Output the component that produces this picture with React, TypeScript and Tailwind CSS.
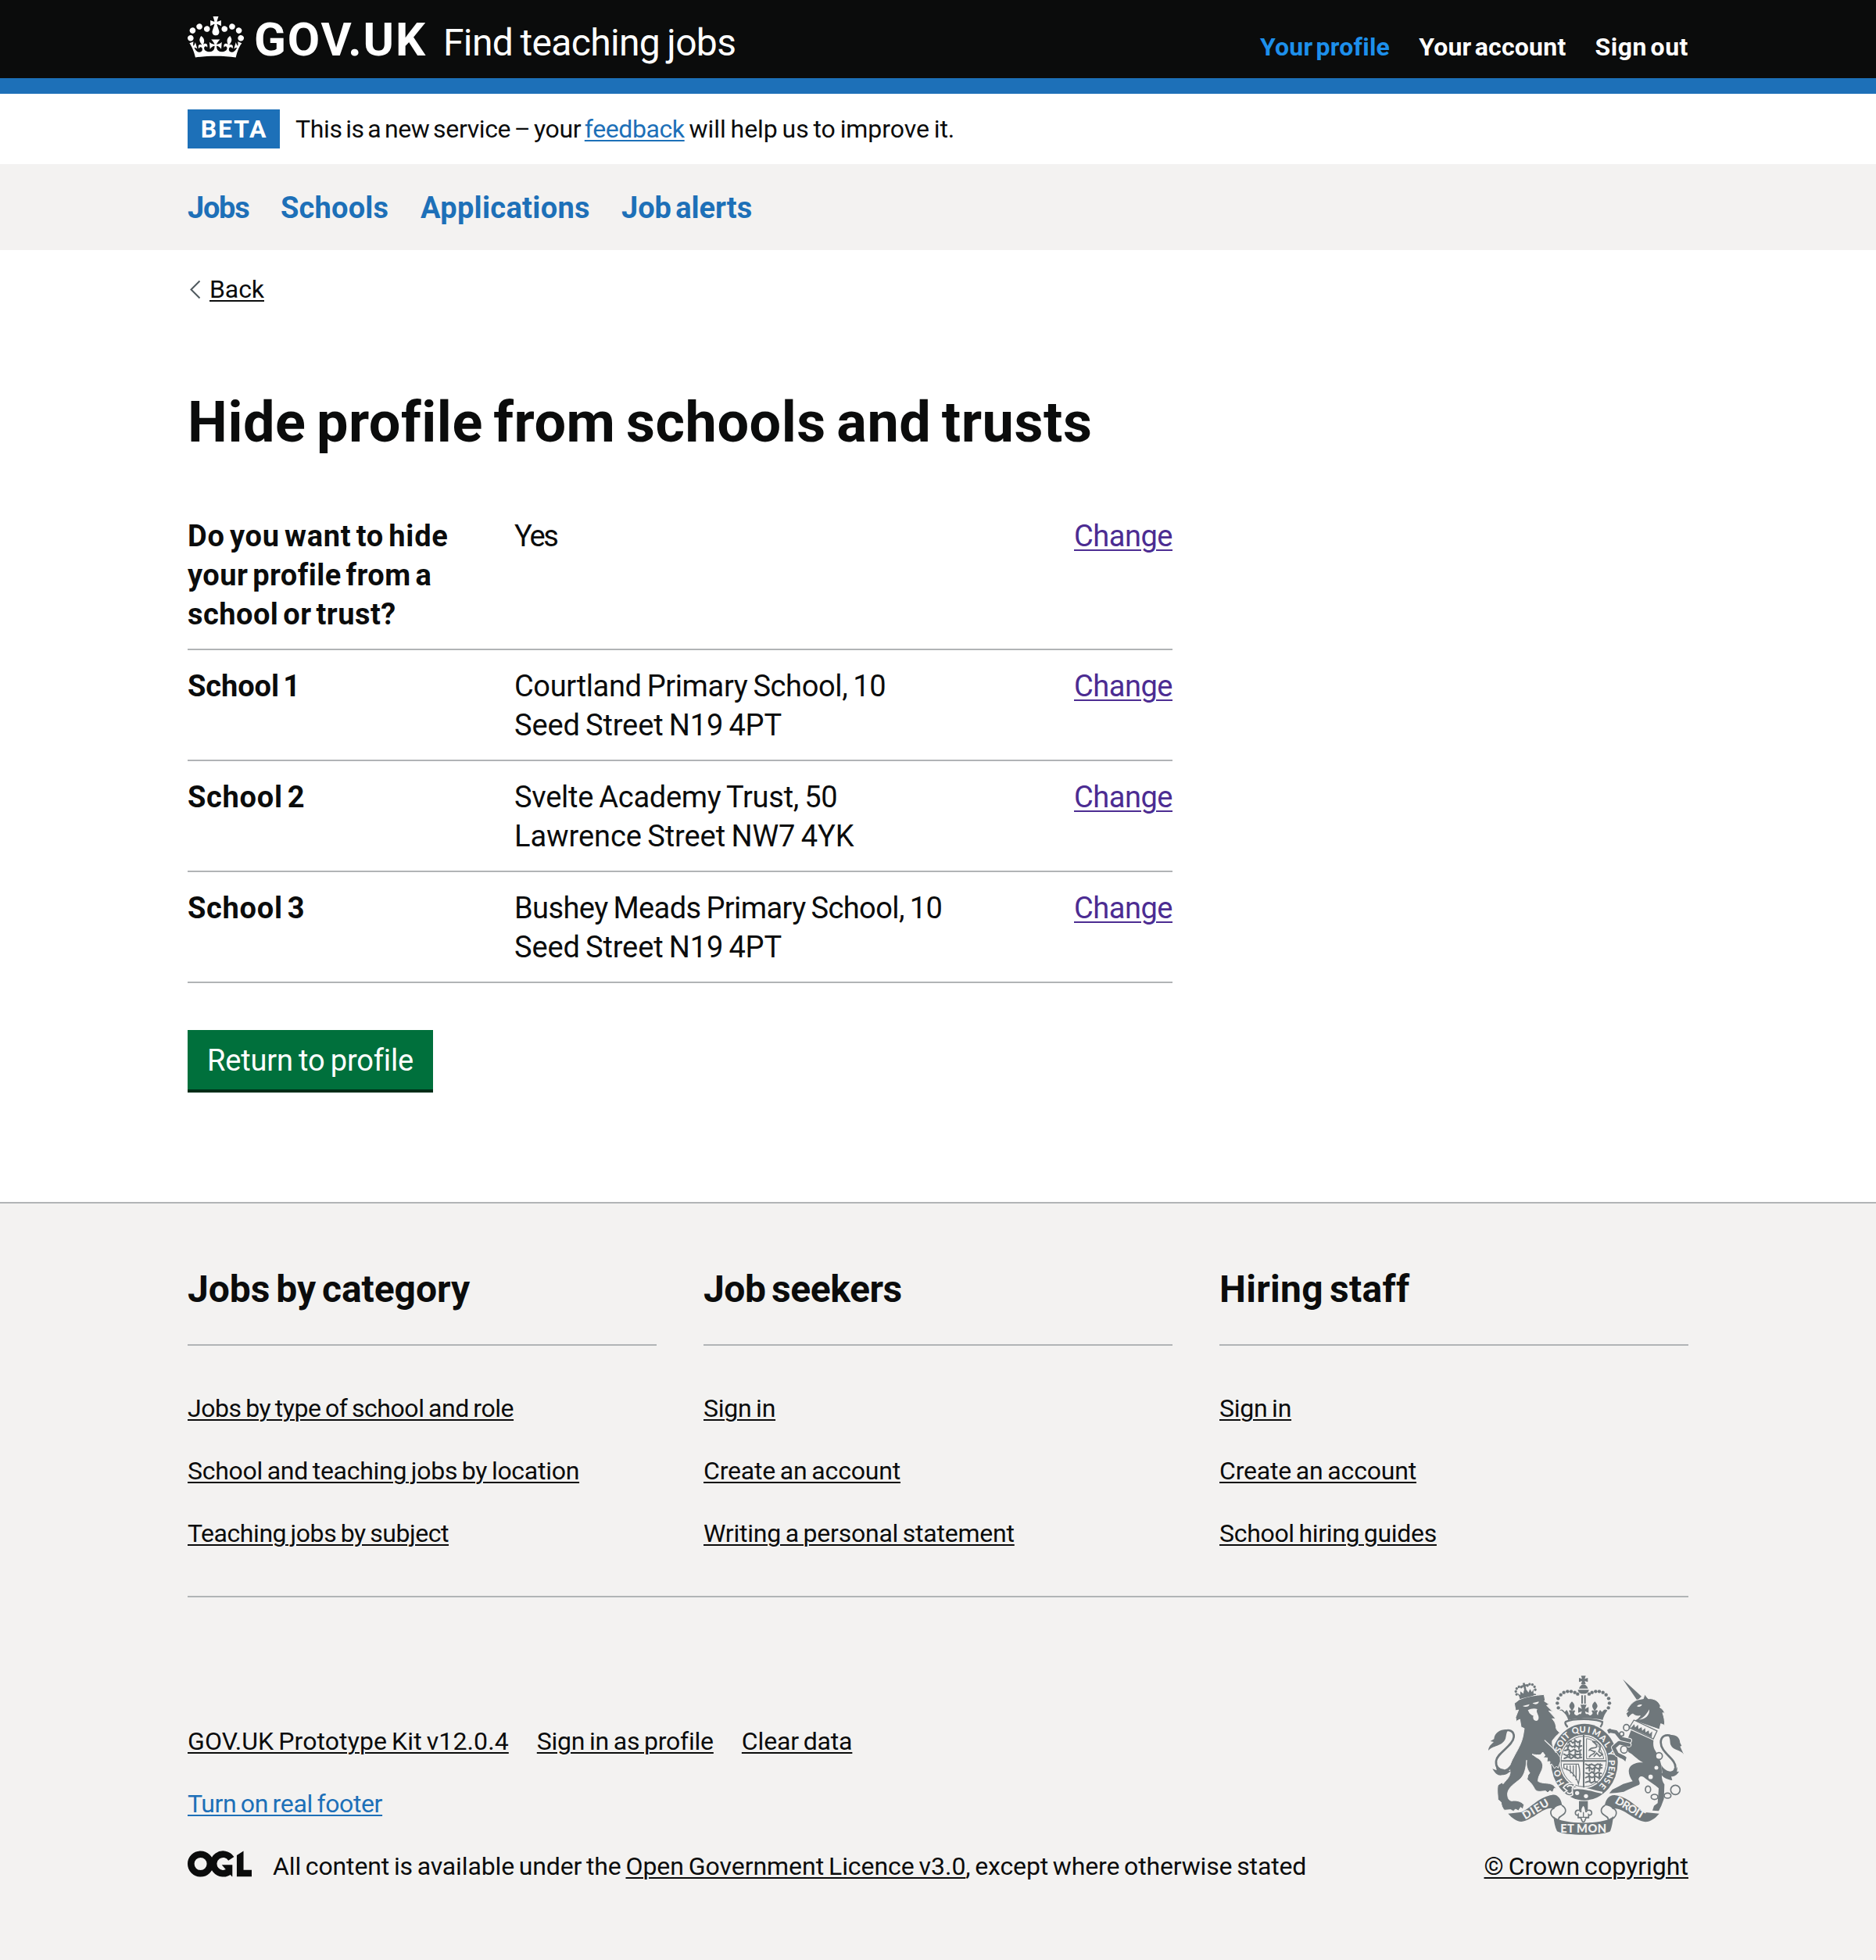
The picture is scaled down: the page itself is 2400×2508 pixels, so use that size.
import React from 'react';

type LinkItem = { label: string; track: string };

const serviceNav = [
  { label: 'Jobs', cls: 'tracking-[-1.3px] w-[119px]' },
  { label: 'Schools', cls: 'tracking-[0.18px] w-[179px]' },
  { label: 'Applications', cls: 'tracking-[0.31px] w-[257px]' },
  { label: 'Job alerts', cls: 'tracking-[-0.05px]' },
];

const footerColumns: { title: string; track: string; links: LinkItem[] }[] = [
  {
    title: 'Jobs by category',
    track: 'tracking-[-0.05px]',
    links: [
      { label: 'Jobs by type of school and role', track: 'tracking-[-0.44px]' },
      { label: 'School and teaching jobs by location', track: 'tracking-[-0.27px]' },
      { label: 'Teaching jobs by subject', track: 'tracking-[-0.45px]' },
    ],
  },
  {
    title: 'Job seekers',
    track: 'tracking-[-0.45px]',
    links: [
      { label: 'Sign in', track: 'tracking-[-0.25px]' },
      { label: 'Create an account', track: 'tracking-[-0.18px]' },
      { label: 'Writing a personal statement', track: 'tracking-[-0.23px]' },
    ],
  },
  {
    title: 'Hiring staff',
    track: 'tracking-[0.28px]',
    links: [
      { label: 'Sign in', track: 'tracking-[-0.25px]' },
      { label: 'Create an account', track: 'tracking-[-0.18px]' },
      { label: 'School hiring guides', track: 'tracking-[-0.31px]' },
    ],
  },
];

type Line = { text: string; track: string };
const summary: { key: Line[]; value: Line[] }[] = [
  {
    key: [
      { text: 'Do you want to hide', track: 'tracking-[0.77px]' },
      { text: 'your profile from a', track: 'tracking-[0.44px]' },
      { text: 'school or trust?', track: 'tracking-[0.47px]' },
    ],
    value: [{ text: 'Yes', track: 'tracking-[-2.2px]' }],
  },
  {
    key: [{ text: 'School 1', track: 'tracking-[-0.1px]' }],
    value: [
      { text: 'Courtland Primary School, 10', track: 'tracking-[-0.37px]' },
      { text: 'Seed Street N19 4PT', track: 'tracking-[-0.14px]' },
    ],
  },
  {
    key: [{ text: 'School 2', track: 'tracking-[0.7px]' }],
    value: [
      { text: 'Svelte Academy Trust, 50', track: 'tracking-[-0.27px]' },
      { text: 'Lawrence Street NW7 4YK', track: 'tracking-[-0.07px]' },
    ],
  },
  {
    key: [{ text: 'School 3', track: 'tracking-[0.7px]' }],
    value: [
      { text: 'Bushey Meads Primary School, 10', track: 'tracking-[-0.58px]' },
      { text: 'Seed Street N19 4PT', track: 'tracking-[-0.14px]' },
    ],
  },
];

function CrownIcon() {
  return (
    <svg viewBox="0 0 132 97" className="mt-px h-[53px] w-[72px] shrink-0" fill="currentColor" aria-hidden="true">
      <path
        fillRule="evenodd"
        d="M25 30.2c3.5 1.5 7.7-.2 9.1-3.7 1.5-3.6-.2-7.8-3.9-9.2-3.6-1.4-7.6.3-9.1 3.9-1.4 3.5.3 7.5 3.9 9zM9 39.5c3.6 1.5 7.8-.2 9.2-3.7 1.5-3.6-.2-7.8-3.9-9.1-3.6-1.5-7.6.2-9.1 3.8-1.4 3.5.3 7.5 3.8 9zM4.4 57.2c3.5 1.5 7.7-.2 9.1-3.8 1.5-3.6-.2-7.7-3.9-9.1-3.5-1.5-7.6.3-9.1 3.8-1.4 3.5.3 7.6 3.9 9.1zm38.3-21.4c3.5 1.5 7.7-.2 9.1-3.8 1.5-3.6-.2-7.7-3.9-9.1-3.6-1.5-7.6.3-9.1 3.8-1.3 3.6.4 7.7 3.9 9.1zm64.4-5.6c-3.6 1.5-7.8-.2-9.1-3.7-1.5-3.6.2-7.8 3.8-9.2 3.6-1.4 7.7.3 9.2 3.9 1.3 3.5-.4 7.5-3.9 9zm15.9 9.3c-3.6 1.5-7.7-.2-9.1-3.7-1.5-3.6.2-7.8 3.7-9.1 3.6-1.5 7.7.2 9.2 3.8 1.5 3.5-.3 7.5-3.8 9zm4.7 17.7c-3.6 1.5-7.8-.2-9.2-3.8-1.5-3.6.2-7.7 3.9-9.1 3.6-1.5 7.7.3 9.2 3.8 1.3 3.5-.4 7.6-3.9 9.1zM89.3 35.8c-3.6 1.5-7.8-.2-9.2-3.8-1.4-3.6.2-7.7 3.9-9.1 3.6-1.5 7.7.3 9.2 3.8 1.4 3.6-.3 7.7-3.9 9.1zM69.7 17.7l8.9 4.7V9.3l-8.9 2.8c-.2-.3-.5-.6-.9-.9L72.4 0H59.6l3.5 11.2c-.3.3-.6.5-.9.9l-8.8-2.8v13.1l8.8-4.7c.3.3.6.7.9.9l-5 15.4v.1c-.2.8-.4 1.6-.4 2.4 0 4.1 3.1 7.5 7 8.1h.2c.3 0 .7.1 1 .1.4 0 .7 0 1-.1h.2c4-.6 7.1-4.1 7.1-8.1 0-.8-.1-1.7-.4-2.4V34l-5.1-15.4c.4-.2.7-.6 1-.9zM66 92.8c16.9 0 32.8 1.1 47.1 3.2 4-16.9 8.9-26.7 14-33.5l-9.6-3.4c1 4.9 1.1 7.2 0 10.2-1.5-1.4-3-4.3-4.2-8.7L108.6 76c2.8-2 5-3.2 7.5-3.3-4.4 9.4-10 11.9-13.6 11.2-4.3-.8-6.3-4.6-5.6-7.9 1-4.7 5.7-5.9 8-.5 4.3-8.7-3-11.4-7.6-8.8 7.1-7.2 7.9-13.5 2.1-21.1-8 6.1-8.1 12.3-4.5 20.8-4.7-5.4-12.1-2.5-9.5 6.2 3.4-5.2 7.9-2 7.2 3.1-.6 4.3-6.4 7.8-13.5 7.2-10.3-.9-10.9-8-11.2-13.8 2.5-.5 7.1 1.8 11 7.3L80.2 60c-4.1 4.4-8 5.3-12.3 5.4 1.4-4.4 8-11.6 8-11.6H55.5s6.4 7.2 7.9 11.6c-4.2-.1-8-1-12.3-5.4l1.4 16.4c3.9-5.5 8.5-7.7 10.9-7.3-.3 5.8-.9 12.8-11.1 13.8-7.2.6-12.9-2.9-13.5-7.2-.7-5 3.8-8.3 7.1-3.1 2.7-8.7-4.6-11.6-9.4-6.2 3.7-8.5 3.6-14.7-4.6-20.8-5.8 7.6-5 13.9 2.2 21.1-4.7-2.6-11.9.1-7.7 8.8 2.3-5.5 7.1-4.2 8.1.5.7 3.3-1.3 7.1-5.7 7.9-3.5.7-9-1.8-13.5-11.2 2.5.1 4.7 1.3 7.5 3.3l-4.7-15.4c-1.2 4.4-2.7 7.2-4.3 8.7-1.1-3-.9-5.3 0-10.2l-9.5 3.4c5 6.9 9.9 16.7 14 33.5 14.8-2.1 30.8-3.2 47.7-3.2z"
      />
    </svg>
  );
}

function LicenceLogo() {
  return (
    <svg viewBox="0 0 483.2 195.7" className="h-[34px] w-[82px] shrink-0" aria-label="OGL">
      <circle cx="97.8" cy="97.8" r="72.4" fill="none" stroke="#0b0c0c" strokeWidth="50.7" />
      <path d="M328.7 58.4A72.4 72.4 0 1 0 317 150.8" fill="none" stroke="#0b0c0c" strokeWidth="50.7" />
      <polygon points="257.6,105.7 337.6,105.7 337.6,193.5 334.6,193.5 314,170 300,152 281.9,133.2" fill="#0b0c0c" />
      <polygon points="421.5,0 421.5,142.8 483.2,142.8 483.2,193.5 370.8,193.5 370.8,32.3" fill="#0b0c0c" />
    </svg>
  );
}

/* Letters of the garter motto: character, centre and rotation */
const motto: [string, number, number, number][] = [
  ['H', 348, 482, -118], ['O', 338, 447, -106],
  ['S', 341, 357, -66], ['O', 349, 333, -56], ['I', 361, 315, -48], ['T', 372, 303, -40],
  ['Q', 406, 283, -16], ['U', 434, 279, 0], ['I', 458, 281, 8],
  ['M', 487, 292, 24], ['A', 513, 313, 42], ['L', 530, 337, 56], ['Y', 543, 370, 74],
  ['P', 546, 406, 90], ['E', 546, 430, 97], ['N', 540, 454, 106], ['S', 528, 476, 118], ['E', 511, 496, 130],
];

const arcLeft: [number, number][] = [
  [341, 196], [337, 178], [340, 160], [350, 146], [362, 137], [376, 133], [390, 133], [404, 137], [415, 143],
];

function RoyalArms() {
  const ink = '#6f777b';
  const bg = '#f3f2f1';
  return (
    <svg viewBox="72 72 750 612" className="h-[204px] w-[250px]" fill={ink} aria-hidden="true">
      {/* central crown */}
      <path d="M428 73h18l-4 12 12-4v16l-12-4 4 12h-18l4-12-12 4V81l12 4z" />
      <path d="M420 122c4-10 10-16 17-16s14 6 18 16zM416 127h42c0 8-8 14-14 15h-14c-6-1-14-7-14-15z" />
      <path d="M429 148h6v32h-6zM440 148h6v32h-6zM426 184h23l-6 16 14-7v22l-14-6 5 16h-22l5-16-14 6v-22l14 7z" />
      {arcLeft.map(([x, y]) => (
        <g key={`${x}-${y}`}>
          <circle cx={x} cy={y} r="6.6" />
          <circle cx={874 - x} cy={y} r="6.6" />
        </g>
      ))}
      <path d="M345 206c8-8 16-2 20 6l8-8c6 8 8 14 8 20 8-4 4-12 0-16 6-6 10-2 12 2-4-12-10-14-10-22 2-8 6-12 10-16 4 4 9 8 10 16 0 8-5 10-9 22 4-6 8-6 12-2-6 6-6 12 2 16 4 2 10 0 12-4h34c4 4 8 6 12 4 8-4 8-10 2-16 4-4 8-4 12 2-4-12-9-14-9-22 1-8 6-12 10-16 4 4 8 8 10 16 0 8-6 10-10 22 2-4 6-8 12-2-4 4-8 12 0 16 0-6 2-12 8-20l8 8c4-8 12-14 20-6-8 10-14 22-18 37-24-9-100-9-132 0-4-15-12-27-26-37z" />
      <path d="M367 250c30-14 112-14 143 0 0 8-2 14-8 20M367 250c0 8 2 14 10 20" fill="none" stroke={ink} strokeWidth="7" />

      {/* garter and quartered shield */}
      <ellipse cx="441" cy="404" rx="128" ry="147" />
      <ellipse cx="438" cy="402" rx="93" ry="103" fill={bg} />
      <ellipse cx="438" cy="402" rx="87" ry="97" fill="none" stroke={ink} strokeWidth="3" />
      <path d="M351 400h174M438 300v204" stroke={ink} strokeWidth="6" />
      <g fill="none" stroke={ink} strokeWidth="6" strokeLinecap="round">
        <path d="M378 329l10-6 8 8 12-8 8 6 10-6M372 344l12-5 10 7 12-5 12 5 12-4M366 360l14-4 8 8 14-8 12 8 14-6M362 374l12 6 10-8 14 8 10-6 20 2M364 390l14-6 12 6 12-8 12 8 16-4M384 334l-8 20M404 318v30M424 322l-4 32M382 364l4 24M406 358v30M424 364v24" />
        <path d="M446 412l12 6 10-6 12 6 12-6 16 4M448 428l14-4 8 8 12-8 12 6 14-4M446 446l12 4 12-8 10 8 14-6 12 4M446 464l14-6 10 6 12-6 12 6 10-4M446 482l12-4 10 6 12-6 10 4M460 414v24M482 418l-4 24M502 412l-4 26M458 450l4 26M480 452v26M498 446v22" />
        <path d="M460 384c8-14 18-6 22-20-10 0-14-8-22-6 6-14 20-4 28-12 2-10-8-14-14-20 12-4 26 6 28 20l-6 18 14 10-10 8-12-12-10 12" strokeWidth="5" />
        <path d="M449 390V314c28 4 54 26 66 76z" strokeWidth="3" />
        <path d="M362 412h56c6 20 6 52 0 76-8-30-30-54-56-60zM374 418v16M386 418l2 28M398 418v40M409 416v56" strokeWidth="4" />
      </g>
      <g fill={bg} fontFamily="Lato, sans-serif" fontWeight="900" fontSize="33" textAnchor="middle">
        {motto.map(([ch, x, y, r], i) => (
          <text key={i} transform={`translate(${x} ${y}) rotate(${r})`} y="11.5">
            {ch}
          </text>
        ))}
      </g>
      <path d="M398 506c30-8 74 8 112 16" fill="none" stroke={bg} strokeWidth="7" />
      <path d="M360 502c10-16 28-20 44-12l-10 16 2 24c-10 8-26 4-34-8l12-8z" stroke={bg} strokeWidth="5" />
      <path d="M374 500c8-8 18-8 22 0M374 520c8 8 16 6 20-2" fill="none" stroke={bg} strokeWidth="5" />
      <circle cx="413" cy="523" r="8" fill={bg} />
      <circle cx="447" cy="535" r="8" fill={bg} />

      {/* lion */}
      <path
        stroke={bg}
        strokeWidth="3"
        d="M172 179L190 165C220 152 250 148 286 145L290 166L287 170L306 183L296 187L320 211L304 208L331 238L317 238C328 249 332 262 332 273C334 280 338 286 347 291C335 301 326 311 318 322C316 332 318 342 324 352L348 386L349 402L340 427L334 420L326 429L316 412L307 415L309 402L297 403L299 388L283 387L290 378L281 366L273 376C262 378 250 376 240 374L258 387C271 393 280 403 281 418C281 440 262 455 263 478C280 489 305 481 322 493L334 507L325 505L319 520L308 514L300 522L292 515L272 517C258 518 252 512 246 500C238 485 228 478 221 470L224 455L231 446C220 430 217 415 219 397C217 425 212 452 195 469C175 486 148 501 146 525C146 542 150 552 162 553C180 550 199 555 209 568L205 585L196 578L188 591L176 585L168 593L158 587L134 589C126 581 122 570 121 558L109 548L108 530C106 510 107 495 111 491L124 483L129 488C141 472 153 465 156 445C152 425 158 405 168 388C182 360 200 335 206 300L210 275L198 270L193 240L179 248L177 232L188 204L177 207Z"
      />
      <path d="M204 189l26-7c0 9-16 13-26 7zM242 178l24-6c0 10-16 14-24 6zM224 205c10-6 26-8 36-4-2 6-4 6 2 20 6 12 4 24-6 25-10 0-14-10-11-20-6 0-10-6-15-9z" fill={bg} />
      <path d="M288 320c12 14 34 26 44 48" stroke={bg} strokeWidth="4" fill="none" />
      <path d="M191 157c18-10 40-16 62-15l3 5c-24 0-46 5-62 16z" />
      <g transform="rotate(-14 214 130)">
        <path d="M182 132l9 10 4-14 9 12 4-10 6-8 6 8 4 10 9-12 4 14 9-10-6 24h-52z" />
        <path d="M211 100h8v7h7v7h-7v12h-8v-12h-7v-7h7z" />
        {[[178, 136], [178, 124], [184, 114], [194, 110], [203, 113], [227, 113], [236, 110], [246, 114], [252, 124], [252, 136]].map(([x, y]) => (
          <circle key={`${x}${y}`} cx={x} cy={y} r="5" />
        ))}
      </g>
      <path d="M132 286c20-10 40 0 38 22-4 36-64 60-68 92-2 22 10 34 30 36" fill="none" stroke={ink} strokeWidth="8" />
      <path d="M150 280c-28-4-54 10-56 36l-14 8 13 3c-8 8-20 16-21 33 16-20 54-16 66-46 4-12 2-24 12-34zM100 412c6 14 22 24 38 20 10-4 18-12 24-26l-2 22-10 10 8 0c-12 12-22 16-32 16-14 4-26-2-38-24l16 6z" />

      {/* unicorn */}
      <path d="M588 86l72 66-16 16z" />
      <path
        stroke={bg}
        strokeWidth="3"
        d="M600 214l6-12c8-14 18-28 36-36 10-2 16-4 25-5l5-17 14 17c22-2 40 8 48 30l-5 2c10 6 18 14 20 24l-8-2c6 18 8 30 8 48l-15-6-5 22-100-34c14-4 22-12 26-18-12 2-20 0-28-8l-8 4-10 12-5-9-3-8 8-10z"
      />
      <path d="M642 190c6-6 14-8 20-6-4 8-12 10-20 6zM690 202c2 22-14 38-40 40 18-8 28-20 40-40z" fill={bg} />
      <g transform="translate(631 243) rotate(25)">
        <path d="M0 0h98v34H-4z" fill={bg} stroke={ink} strokeWidth="4" />
        <path d="M2 32L8 14l8 10 6-14 8 14 8-12 8 12 6-14 8 14 8-12 8 12 6-14 8 22z" />
      </g>
      <path d="M620 282L706 321C704 340 706 350 714 362C728 385 738 410 738 440C736 465 740 480 748 490L746 545L736 572L726 592L702 590L708 572L722 562L726 505C712 490 690 480 676 468C660 450 648 462 649 472C656 488 654 492 644 494C620 504 605 512 592 518L566 522L536 524L548 510L572 498L590 488L626 478C606 450 604 420 634 410C645 405 658 406 666 406C640 392 628 374 610 366C604 352 602 330 606 318Z" />
      <g fill="none" strokeLinejoin="round" strokeLinecap="round">
        <path d="M614 322L582 314L562 289L538 284M612 338L574 330L553 348L566 374L594 388" stroke={bg} strokeWidth="20" />
        <path d="M614 322L582 314L562 289L538 284M612 338L574 330L553 348L566 374L594 388" stroke={ink} strokeWidth="14" />
      </g>
      <path d="M540 275l-12 6 6 14 16-8zM588 378l14 8-4 16-12-12-14-4z" />
      <g fill={bg} stroke={ink} strokeWidth="5">
        <ellipse cx="602" cy="272" rx="11" ry="12" />
        <ellipse cx="593" cy="356" rx="13" ry="14" />
        <circle cx="584" cy="296" r="8" />
        <circle cx="727" cy="381" r="13" />
        <circle cx="717" cy="426" r="10" />
        <circle cx="695" cy="461" r="11" />
        <ellipse cx="685" cy="509" rx="10" ry="13" />
        <ellipse cx="710" cy="538" rx="13" ry="10" />
        <ellipse cx="760" cy="533" rx="13" ry="10" />
        <circle cx="790" cy="511" r="18" />
      </g>
      <path d="M776 305c-22-10-42 0-42 24 0 40 60 64 56 96-2 12-8 20-20 24" fill="none" stroke={ink} strokeWidth="8" />
      <path d="M762 302c26-6 44 4 46 28l6 12-6 2 14 30c-12-18-40-14-50-36-4-12 0-24-10-36zM736 414c6 14 18 24 34 26 10-2 22-6 28-18l-2 20 8-2c-8 14-18 20-30 20l4 14c-18-2-38-10-48-30l10 2z" />

      {/* pendant and scrolls */}
      <path d="M420 554h34v34h-34z" />
      <path d="M437 568c-8 10-12 16-9 28-8-12-22-8-22 4 0 8 8 10 11 6v12h10l4 10c2 8 10 8 12 0l4-10h10v-12c4 4 12 2 12-6 0-12-15-16-23-4 2-12-1-18-9-28z" fill={bg} stroke={ink} strokeWidth="5" />
      <path d="M437 596v22M420 616h36" stroke={ink} strokeWidth="4" />
      <path d="M148 602l52-6c38-18 66-58 118-66 22-2 34 18 37 40-14 0-26 6-30 14-36-16-78 42-126 49-20-2-36-14-51-31z" />
      <path d="M354 570c22 14 16 30 2 38-10 6-16 10-14 18M324 582c-18 6-16 28 4 40" fill="none" stroke={ink} strokeWidth="5" />
      <path d="M728 602l-54-5c-34-18-64-60-118-66-24 0-34 20-37 40 14 0 26 6 30 14 34-14 76 42 126 49 20-2 36-12 53-32z" />
      <path d="M520 570c-22 14-16 30-2 38 10 6 16 10 14 18M550 582c18 6 18 28-2 40" fill="none" stroke={ink} strokeWidth="5" />
      <path d="M322 612c30 34 200 34 230 0-2 20-6 42-12 58-30 18-176 18-204 0-8-16-12-38-14-58z" />
      <g fill={bg} fontFamily="Lato, sans-serif" fontWeight="900" fontSize="44" textAnchor="middle">
        <text transform="translate(261 597) rotate(-31)" fontSize="42" textLength="110">DIEU</text>
        <text x="437" y="674" textLength="176">ET MON</text>
        <text transform="translate(609 592) rotate(31)" fontSize="42" textLength="124">DROIT</text>
      </g>
    </svg>
  );
}

const link = 'underline decoration-[2px] underline-offset-[3px]';

export default function App() {
  return (
    <div className="flex min-h-[2508px] flex-col bg-white font-['Roboto',sans-serif] text-[32px] leading-[40px] text-[#0b0c0c] [word-spacing:-2px]">
      <header className="h-[120px] border-b-[20px] border-[#1d70b8] bg-[#0b0c0c] text-white">
        <div className="mx-auto flex w-[1920px] justify-between pt-[20px]">
          <div className="flex items-start">
            <CrownIcon />
            <div className="ml-[13px] mt-px flex items-baseline leading-[60px]">
              <span className="w-[242px] text-[60px] font-bold tracking-[1.9px]">GOV.UK</span>
              <span className="text-[48px] tracking-[-0.66px]">Find teaching jobs</span>
            </div>
          </div>
          <nav className="mt-[20px] flex gap-[37px] font-bold [word-spacing:-4px]">
            <a className="tracking-[0.22px] text-[#1d8feb]">Your profile</a>
            <a className="tracking-[0.22px]">Your account</a>
            <a className="tracking-[0.55px]">Sign out</a>
          </nav>
        </div>
      </header>

      <div className="mx-auto flex h-[90px] w-[1920px] items-center">
        <strong className="flex h-[50px] w-[118px] items-center justify-center bg-[#1d70b8] pl-[1px] font-bold tracking-[1.8px] text-white">BETA</strong>
        <p className="ml-[20px] whitespace-pre">
          <span className="tracking-[-0.36px] [word-spacing:-3px]">This is a new service – your </span>
          <a className={`${link} tracking-[-0.4px] text-[#1d70b8]`}>feedback</a>
          <span className="tracking-[-0.06px]"> will help us to improve it.</span>
        </p>
      </div>

      <div className="h-[110px] bg-[#f3f2f1]">
        <nav className="mx-auto flex w-[1920px] pt-[31px] text-[38px] font-bold leading-[50px] text-[#1d70b8] [word-spacing:-4px]">
          {serviceNav.map((n) => (
            <a key={n.label} className={n.cls}>{n.label}</a>
          ))}
        </nav>
      </div>

      <main className="mx-auto w-[1920px] flex-1">
        <div className="flex pt-[30px]">
          <svg viewBox="0 0 28 40" className="-mt-px h-[40px] w-[28px]" fill="none" stroke="#505a5f" strokeWidth="2">
            <path d="M15.5 10.5L4.5 21.5L15.5 32.5" />
          </svg>
          <a className={`${link} tracking-[-0.08px]`}>Back</a>
        </div>

        <h1 className="mt-[111px] text-[72px] font-bold leading-[80px] tracking-[0.54px] [word-spacing:-5px]">Hide profile from schools and trusts</h1>

        <dl className="mt-[59px] w-[1260px] text-[38px] leading-[50px]">
          {summary.map((row, i) => (
            <div key={i} className="grid grid-cols-[418px_1fr_auto] border-b-2 border-[#b1b4b6] pb-[19px] pt-[21px]">
              <dt className="font-bold [word-spacing:-4px]">
                {row.key.map((l) => (
                  <span key={l.text} className={`block ${l.track}`}>{l.text}</span>
                ))}
              </dt>
              <dd>
                {row.value.map((l) => (
                  <span key={l.text} className={`block ${l.track}`}>{l.text}</span>
                ))}
              </dd>
              <dd>
                <a className="tracking-[-0.47px] text-[#4c2c92] underline decoration-[2px] underline-offset-[4px]">Change</a>
              </dd>
            </div>
          ))}
        </dl>

        <button className="mt-[60px] block h-[76px] w-[314px] bg-[#00703c] pt-[2px] text-[38px] leading-[74px] tracking-[-0.16px] text-white shadow-[0_4px_0_#002d18] [word-spacing:-2px]">
          Return to profile
        </button>
      </main>

      <footer className="h-[970px] border-t-2 border-[#b1b4b6] bg-[#f3f2f1] pt-[80px]">
        <div className="mx-auto w-[1920px]">
          <div className="grid grid-cols-3 gap-[60px] border-b-2 border-[#b1b4b6] pb-[60px]">
            {footerColumns.map((col) => (
              <section key={col.title}>
                <h2 className={`border-b-2 border-[#b1b4b6] pb-[40px] text-[48px] font-bold leading-[60px] [word-spacing:-4px] ${col.track}`}>{col.title}</h2>
                <ul className="mt-[60px] flex flex-col gap-[40px]">
                  {col.links.map((l) => (
                    <li key={l.label}>
                      <a className={`${link} ${l.track}`}>{l.label}</a>
                    </li>
                  ))}
                </ul>
              </section>
            ))}
          </div>

          <div className="flex items-end justify-between pt-[100px]">
            <div className="flex flex-col gap-[40px]">
              <div className="flex gap-[36px]">
                <a className={`${link} tracking-[0.1px]`}>GOV.UK Prototype Kit v12.0.4</a>
                <a className={`${link} tracking-[-0.22px]`}>Sign in as profile</a>
                <a className={`${link} tracking-[-0.16px]`}>Clear data</a>
              </div>
              <div>
                <a className={`${link} tracking-[-0.37px] text-[#1d70b8]`}>Turn on real footer</a>
              </div>
              <div className="flex">
                <LicenceLogo />
                <p className="ml-[27px] whitespace-pre">
                  <span className="tracking-[-0.14px]">All content is available under the </span>
                  <a className={`${link} tracking-[-0.05px]`}>Open Government Licence v3.0</a>
                  <span className="tracking-[-0.15px]">, except where otherwise stated</span>
                </p>
              </div>
            </div>
            <div className="flex flex-col items-end">
              <div className="mr-[6px]">
                <RoyalArms />
              </div>
              <a className={`${link} mt-[20px] tracking-[0.03px]`}>© Crown copyright</a>
            </div>
          </div>
        </div>
      </footer>
    </div>
  );
}
